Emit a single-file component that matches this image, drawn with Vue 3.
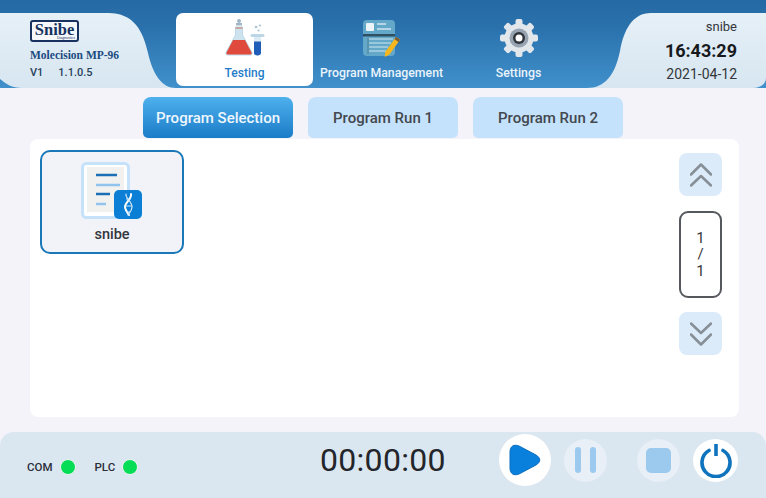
<script setup>
const navItems = [
  { id: 'testing', label: 'Testing', active: true },
  { id: 'program', label: 'Program Management' },
  { id: 'settings', label: 'Settings' }
]
const tabs = [
  { label: 'Program Selection', active: true },
  { label: 'Program Run 1' },
  { label: 'Program Run 2' }
]
const lamps = ['COM', 'PLC']
</script>

<template>
  <div class="page">
    <header class="top">
      <div class="brand">
        <div class="logo">
          <span class="logo-name">Snibe</span>
          <span class="logo-sub">Diagnostics</span>
        </div>
        <div class="model">Molecision MP-96</div>
        <div class="version"><span>V1</span><span>1.1.0.5</span></div>
      </div>

      <nav class="nav">
        <div v-for="item in navItems" :key="item.id" class="nav-item" :class="{ active: item.active }">
          <svg v-if="item.id === 'testing'" class="nav-icon" width="42" height="40" viewBox="0 0 42 40">
            <circle cx="15" cy="3" r="2" fill="#9fb6c8" />
            <rect x="12" y="5" width="6" height="2.5" fill="#9fb6c8" />
            <path d="M11.5 9h7v8l9.5 17.5c.6 1.3-.2 2.5-1.6 2.5H3.6C2.2 37 1.4 35.8 2 34.5L11.5 17z" fill="#cfe3ef" stroke="#b9d9ec" />
            <rect x="11.5" y="9" width="7" height="2" fill="#c9a6a0" />
            <path d="M9 22h12l6.5 12.500c.5 1-.1 2-1.200 2H3.700c-1.100 0-1.700-1-1.200-2z" fill="#df4a3c" />
            <path d="M28 17.500h11" stroke="#bcd6e6" stroke-width="3" stroke-linecap="round" />
            <path d="M30 19h7v16c0 1.500-1.500 2.500-3.500 2.500S30 36.500 30 35z" fill="#dcebf4" />
            <path d="M30 23.500h7V35c0 1.500-1.500 2.500-3.500 2.500S30 36.500 30 35z" fill="#1f5db8" />
            <circle cx="32" cy="9" r="1.300" fill="#a9c4d6" />
            <circle cx="36" cy="7.500" r="1.100" fill="#a9c4d6" />
            <circle cx="34.500" cy="12.500" r="1.100" fill="#a9c4d6" />
          </svg>
          <svg v-else-if="item.id === 'program'" class="nav-icon" width="42" height="40" viewBox="0 0 42 40">
            <rect x="2" y="2" width="32" height="36" rx="4" fill="#63a8c8" />
            <rect x="5" y="5" width="8" height="8" rx="1" fill="#eef5f9" />
            <path d="M16 6h9M16 11h14" stroke="#cfe5f0" stroke-width="1.600" />
            <rect x="2" y="16" width="32" height="2.500" fill="#2f4f63" />
            <path d="M8 21h24M8 25h22M8 29h19M8 33h17" stroke="#cfe5f0" stroke-width="1.200" />
            <path d="M7 20v16" stroke="#4f7e96" stroke-width="1" />
            <path d="M35 19l4 2.800-10.500 14.700-4.800 2.500.6-5.300z" fill="#f5b61e" />
            <path d="M35 19l4 2.800-1.500 2.100-4-2.800z" fill="#7a5a30" />
          </svg>
          <svg v-else class="nav-icon" width="42" height="40" viewBox="0 0 42 40">
            <g fill="#e2e7ec">
              <circle cx="21" cy="20" r="14.500" />
              <rect v-for="a in [0, 45, 90, 135, 180, 225, 270, 315]" :key="a" x="17.500" y="1" width="7" height="8" rx="2" :transform="`rotate(${a} 21 20)`" />
            </g>
            <circle cx="21" cy="20" r="9.500" fill="#98a3b1" />
            <circle cx="21" cy="20" r="6" fill="#30353c" />
            <circle cx="21" cy="20" r="3.500" fill="#fff" />
          </svg>
          <span class="nav-label">{{ item.label }}</span>
        </div>
      </nav>

      <div class="clock">
        <div class="user">snibe</div>
        <div class="time">16:43:29</div>
        <div class="date">2021-04-12</div>
      </div>
    </header>

    <div class="tabs">
      <div v-for="t in tabs" :key="t.label" class="tab" :class="{ active: t.active }">{{ t.label }}</div>
    </div>

    <main class="card">
      <div class="files">
        <div class="tile">
          <svg width="62" height="58" viewBox="0 0 62 58">
            <rect x="1.500" y="1.500" width="46" height="54" rx="4" fill="#fff" stroke="#c6e2fb" stroke-width="3" />
            <rect x="6" y="5" width="37" height="45" fill="#f1f1ef" />
            <path d="M15 13h21" stroke="#1a6fb5" stroke-width="2.500" />
            <path d="M15 23h24" stroke="#92c3ec" stroke-width="2.500" />
            <path d="M15 32h14" stroke="#1a6fb5" stroke-width="2.500" />
            <path d="M15 42h10" stroke="#92c3ec" stroke-width="2.500" />
            <rect x="33" y="28" width="28" height="29" rx="5" fill="#0b7fd6" />
            <path d="M50 32c1 5-6 8-6 13 0 3 2 5 4 8" fill="none" stroke="#fff" stroke-width="2" stroke-linecap="round" />
            <path d="M45 32c-1 4 6 7 6 13 0 3-2 5-4 8" fill="none" stroke="#d4e9f9" stroke-width="1.200" stroke-linecap="round" />
            <path d="M45 37h5M44.500 44h6.500M45 50h4.500" stroke="#cbe5f8" stroke-width="1.200" />
          </svg>
          <span class="tile-name">snibe</span>
        </div>
      </div>

      <aside class="pager">
        <button class="page-btn">
          <svg width="22" height="24" viewBox="0 0 22 24" fill="none" stroke="#868e96" stroke-width="2.500" stroke-linecap="round" stroke-linejoin="round">
            <path d="M1 11.500L11 1.500l10 10M1 22.500L11 13l10 9.500" />
          </svg>
        </button>
        <div class="page-num"><span>1</span><span>/</span><span>1</span></div>
        <button class="page-btn">
          <svg width="22" height="24" viewBox="0 0 22 24" fill="none" stroke="#868e96" stroke-width="2.500" stroke-linecap="round" stroke-linejoin="round">
            <path d="M1 1.500L11 11l10-9.500M1 12.500l10 10 10-10" />
          </svg>
        </button>
      </aside>
    </main>

    <footer class="bottom">
      <div class="lamps">
        <div v-for="l in lamps" :key="l" class="lamp">
          <span>{{ l }}</span>
          <i class="dot"></i>
        </div>
      </div>
      <div class="timer">00:00:00</div>
      <div class="controls">
        <div class="ctl play">
          <svg width="32" height="32" viewBox="0 0 32 32">
            <path d="M1 8C1 2 5 0 10 2L27 11C32 14 32 18 27 21L10 30C5 32 1 30 1 24Z" fill="#0a80dd" stroke="#0a6cc0" stroke-width="1" />
          </svg>
        </div>
        <div class="ctl pause">
          <svg width="24" height="26" viewBox="0 0 24 26">
            <rect x="1" y="0" width="6" height="26" rx="3" fill="#9ccaee" />
            <rect x="16" y="0" width="6" height="26" rx="3" fill="#9ccaee" />
          </svg>
        </div>
        <div class="ctl stop">
          <span class="stop-box"></span>
        </div>
        <div class="ctl power">
          <svg width="32" height="35" viewBox="0 0 32 35" fill="none" stroke="#0f74bd">
            <path d="M9 7.500a14 14 0 1 0 14 0" stroke-width="3.600" stroke-linecap="round" />
            <path d="M16 1v12" stroke-width="3.600" />
          </svg>
        </div>
      </div>
    </footer>
  </div>
</template>

<style scoped>
.page {
  width: 766px;
  height: 498px;
  display: flex;
  flex-direction: column;
  overflow: hidden;
  background: #f3f3f9;
  font-family: Roboto, "Liberation Sans", sans-serif;
  color: #33363c;
}

.top {
  height: 88px;
  flex: none;
  display: flex;
  background: linear-gradient(#2569a4, #2a71ac 30%, #4090cc);
}
.brand {
  width: 176px;
  margin-top: 13px;
  padding: 7px 0 0 30px;
  box-sizing: border-box;
  background: linear-gradient(#e6f0f7, #d7e6f1);
  clip-path: path("M0 0H108C134 0 143 18 148 40C153 62 162 75 176 75H22C12 75 6 71 0 66Z");
}
.logo {
  width: 49px;
  height: 22px;
  box-sizing: border-box;
  border: 2px solid #17325f;
  border-radius: 3px;
  display: flex;
  flex-direction: column;
  align-items: center;
  background: #f4f8fb;
  font-family: "Liberation Serif", serif;
  color: #17325f;
  overflow: hidden;
}
.logo-name {
  font-size: 16.500px;
  line-height: 15px;
  font-weight: 700;
}
.logo-sub {
  font-size: 3.500px;
  line-height: 3px;
  align-self: flex-end;
  margin-right: 2px;
  font-family: "Liberation Sans", sans-serif;
}
.model {
  margin-top: 5px;
  font-family: "Liberation Serif", serif;
  font-weight: 700;
  font-size: 11.500px;
  line-height: 16px;
  color: #1b4a80;
  white-space: nowrap;
}
.version {
  margin-top: 2px;
  display: flex;
  gap: 15px;
  font-size: 11px;
  line-height: 16px;
  font-weight: 500;
  color: #27405c;
}

.nav {
  display: flex;
  margin-top: 13px;
}
.nav-item {
  width: 137px;
  height: 73px;
  display: flex;
  flex-direction: column;
  align-items: center;
  box-sizing: border-box;
  padding-top: 5px;
  color: #eaf4fb;
  font-size: 12.300px;
  font-weight: 500;
  border-radius: 7px;
}
.nav-item.active {
  background: #fff;
  color: #1f7cc8;
  font-size: 12px;
}
.nav-icon {
  display: block;
  flex: none;
}
.nav-label {
  margin-top: 8px;
  line-height: 14px;
  white-space: nowrap;
}

.clock {
  width: 179px;
  margin: 13px 0 0 auto;
  padding: 6px 29px 0 0;
  box-sizing: border-box;
  text-align: right;
  background: linear-gradient(#e6f0f7, #d7e6f1);
  clip-path: path("M64 0H179V65C179 71 173 75 166 75H0C18 75 28 62 33 38C37 16 46 0 64 0Z");
}
.user {
  font-size: 13px;
  line-height: 16px;
}
.time {
  margin-top: 5px;
  font-size: 18px;
  font-weight: 700;
  line-height: 22px;
  color: #17191d;
}
.date {
  margin-top: 4px;
  font-size: 14px;
  line-height: 17px;
}

.tabs {
  display: flex;
  gap: 15px;
  margin: 9px 0 0 143px;
}
.tab {
  width: 150px;
  height: 41px;
  padding-top: 1px;
  box-sizing: border-box;
  display: flex;
  align-items: center;
  justify-content: center;
  border-radius: 8px 8px 5px 5px;
  background: #c5e2fc;
  font-size: 15px;
  font-weight: 500;
  color: #43474e;
}
.tab.active {
  background: linear-gradient(#4eb0ec, #1b7cc8);
  color: #eef7fd;
}

.card {
  width: 709px;
  height: 278px;
  margin: 1px 0 0 30px;
  display: flex;
  justify-content: space-between;
  background: #fff;
  border-radius: 8px;
}
.files {
  padding: 11px 0 0 10px;
}
.tile {
  width: 144px;
  height: 104px;
  box-sizing: border-box;
  padding-top: 10px;
  display: flex;
  flex-direction: column;
  align-items: center;
  border: 2px solid #1b78b8;
  border-radius: 10px;
  background: #f2f3f8;
}
.tile-name {
  margin-top: 6px;
  font-size: 14.500px;
  font-weight: 500;
  line-height: 17px;
}
.pager {
  display: flex;
  flex-direction: column;
  gap: 14px;
  padding: 14px 17px 0 0;
}
.page-btn {
  width: 43px;
  height: 43px;
  padding: 0;
  border: none;
  border-radius: 8px;
  background: #dcebf9;
  display: flex;
  align-items: center;
  justify-content: center;
}
.page-num {
  width: 43px;
  height: 87px;
  margin-top: 1px;
  box-sizing: border-box;
  border: 2px solid #55585c;
  border-radius: 9px;
  display: flex;
  flex-direction: column;
  align-items: center;
  justify-content: center;
  font-size: 15px;
  line-height: 16.500px;
}

.bottom {
  margin-top: auto;
  height: 66px;
  flex: none;
  display: flex;
  align-items: center;
  background: #dae6f0;
  border-radius: 14px 14px 0 0;
}
.lamps {
  width: 320px;
  box-sizing: border-box;
  padding: 4px 0 0 27px;
  display: flex;
  gap: 19px;
}
.lamp {
  display: flex;
  align-items: center;
  gap: 7px;
  font-size: 11.500px;
  font-weight: 500;
  color: #2c2e3a;
}
.dot {
  width: 16px;
  height: 16px;
  border-radius: 50%;
  background: #04dd55;
  border: 1px solid #eef3f6;
  box-sizing: border-box;
}
.timer {
  width: 179px;
  padding-bottom: 10px;
  font-size: 32px;
  line-height: 38px;
  color: #23252a;
  letter-spacing: 0.3px;
}
.controls {
  display: flex;
  align-items: center;
  padding-bottom: 10px;
}
.ctl {
  width: 43px;
  height: 43px;
  border-radius: 50%;
  display: flex;
  align-items: center;
  justify-content: center;
  background: #e8eff6;
  flex: none;
}
.play {
  width: 52px;
  height: 52px;
  background: #fff;
  margin-right: 13px;
}
.pause {
  margin-right: 30px;
}
.stop {
  margin-right: 13px;
}
.stop-box {
  width: 25px;
  height: 25px;
  border-radius: 5px;
  background: #9ccaee;
}
.power {
  width: 45px;
  background: #fff;
}
</style>
